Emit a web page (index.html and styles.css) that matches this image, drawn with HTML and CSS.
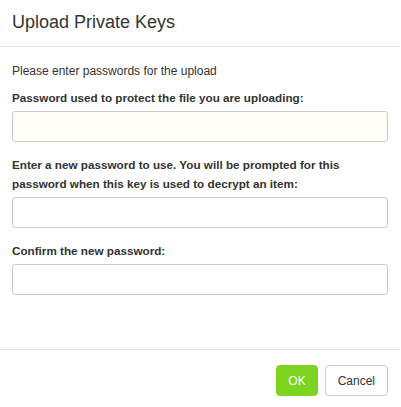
FILE: index.html
```html
<!DOCTYPE html>
<html lang="en">
<head>
    <meta charset="UTF-8">
    <title>Upload Private Keys</title>
    <link rel="stylesheet" href="styles.css">
</head>
<body>
    <div class="modal">
        <div class="modal-header">
            <h4>Upload Private Keys</h4>
        </div>
        <div class="modal-body">
            <p class="intro">Please enter passwords for the upload</p>
            <div class="field">
                <label for="filePassword">Password used to protect the file you are uploading:</label>
                <input type="password" id="filePassword" class="first">
            </div>
            <div class="field">
                <label for="newPassword">Enter a new password to use. You will be prompted for this password when this key is used to decrypt an item:</label>
                <input type="password" id="newPassword">
            </div>
            <div class="field">
                <label for="confirmPassword">Confirm the new password:</label>
                <input type="password" id="confirmPassword">
            </div>
        </div>
        <div class="modal-footer">
            <button class="btn btn-ok">OK</button>
            <button class="btn btn-cancel">Cancel</button>
        </div>
    </div>
</body>
</html>
```

FILE: styles.css
```css
body {
    margin: 0;
    background: #fff;
    font-family: "Liberation Sans", Arial, sans-serif;
    color: #333;
}

.modal {
    width: 400px;
    height: 407px;
    display: flex;
    flex-direction: column;
    background: #fff;
}

.modal-header {
    height: 47px;
    box-sizing: border-box;
    padding: 12px 12px 0;
    border-bottom: 1px solid #e5e5e5;
}
.modal-header h4 {
    margin: 0;
    font-size: 18px;
    font-weight: normal;
    line-height: 20px;
}

.modal-body {
    flex: 1;
    padding: 16px 12px 0;
}
.intro {
    margin: 0 0 8px;
    font-size: 12px;
    line-height: 17px;
}
.field {
    margin-bottom: 13px;
}
.field label {
    display: block;
    font-size: 11.7px;
    font-weight: bold;
    line-height: 19px;
    margin-bottom: 4px;
}
.field input {
    display: block;
    width: 100%;
    box-sizing: border-box;
    height: 31px;
    border: 1px solid #ccc;
    border-radius: 3px;
    background: #fff;
    outline: none;
}
.field input.first {
    background: #fffff8;
}

.modal-footer {
    height: 58px;
    box-sizing: border-box;
    border-top: 1px solid #e5e5e5;
    padding: 15px 12px 0;
    display: flex;
    justify-content: flex-end;
    gap: 7px;
}
.btn {
    height: 31px;
    padding: 0 11px;
    font-family: "Liberation Sans", Arial, sans-serif;
    font-size: 12px;
    border-radius: 4px;
    cursor: pointer;
}
.btn-ok {
    background: #7ed321;
    border: 1px solid #7ed321;
    color: #fff;
}
.btn-cancel {
    padding: 0 12px;
    background: #fff;
    border: 1px solid #ccc;
    color: #333;
}
```
